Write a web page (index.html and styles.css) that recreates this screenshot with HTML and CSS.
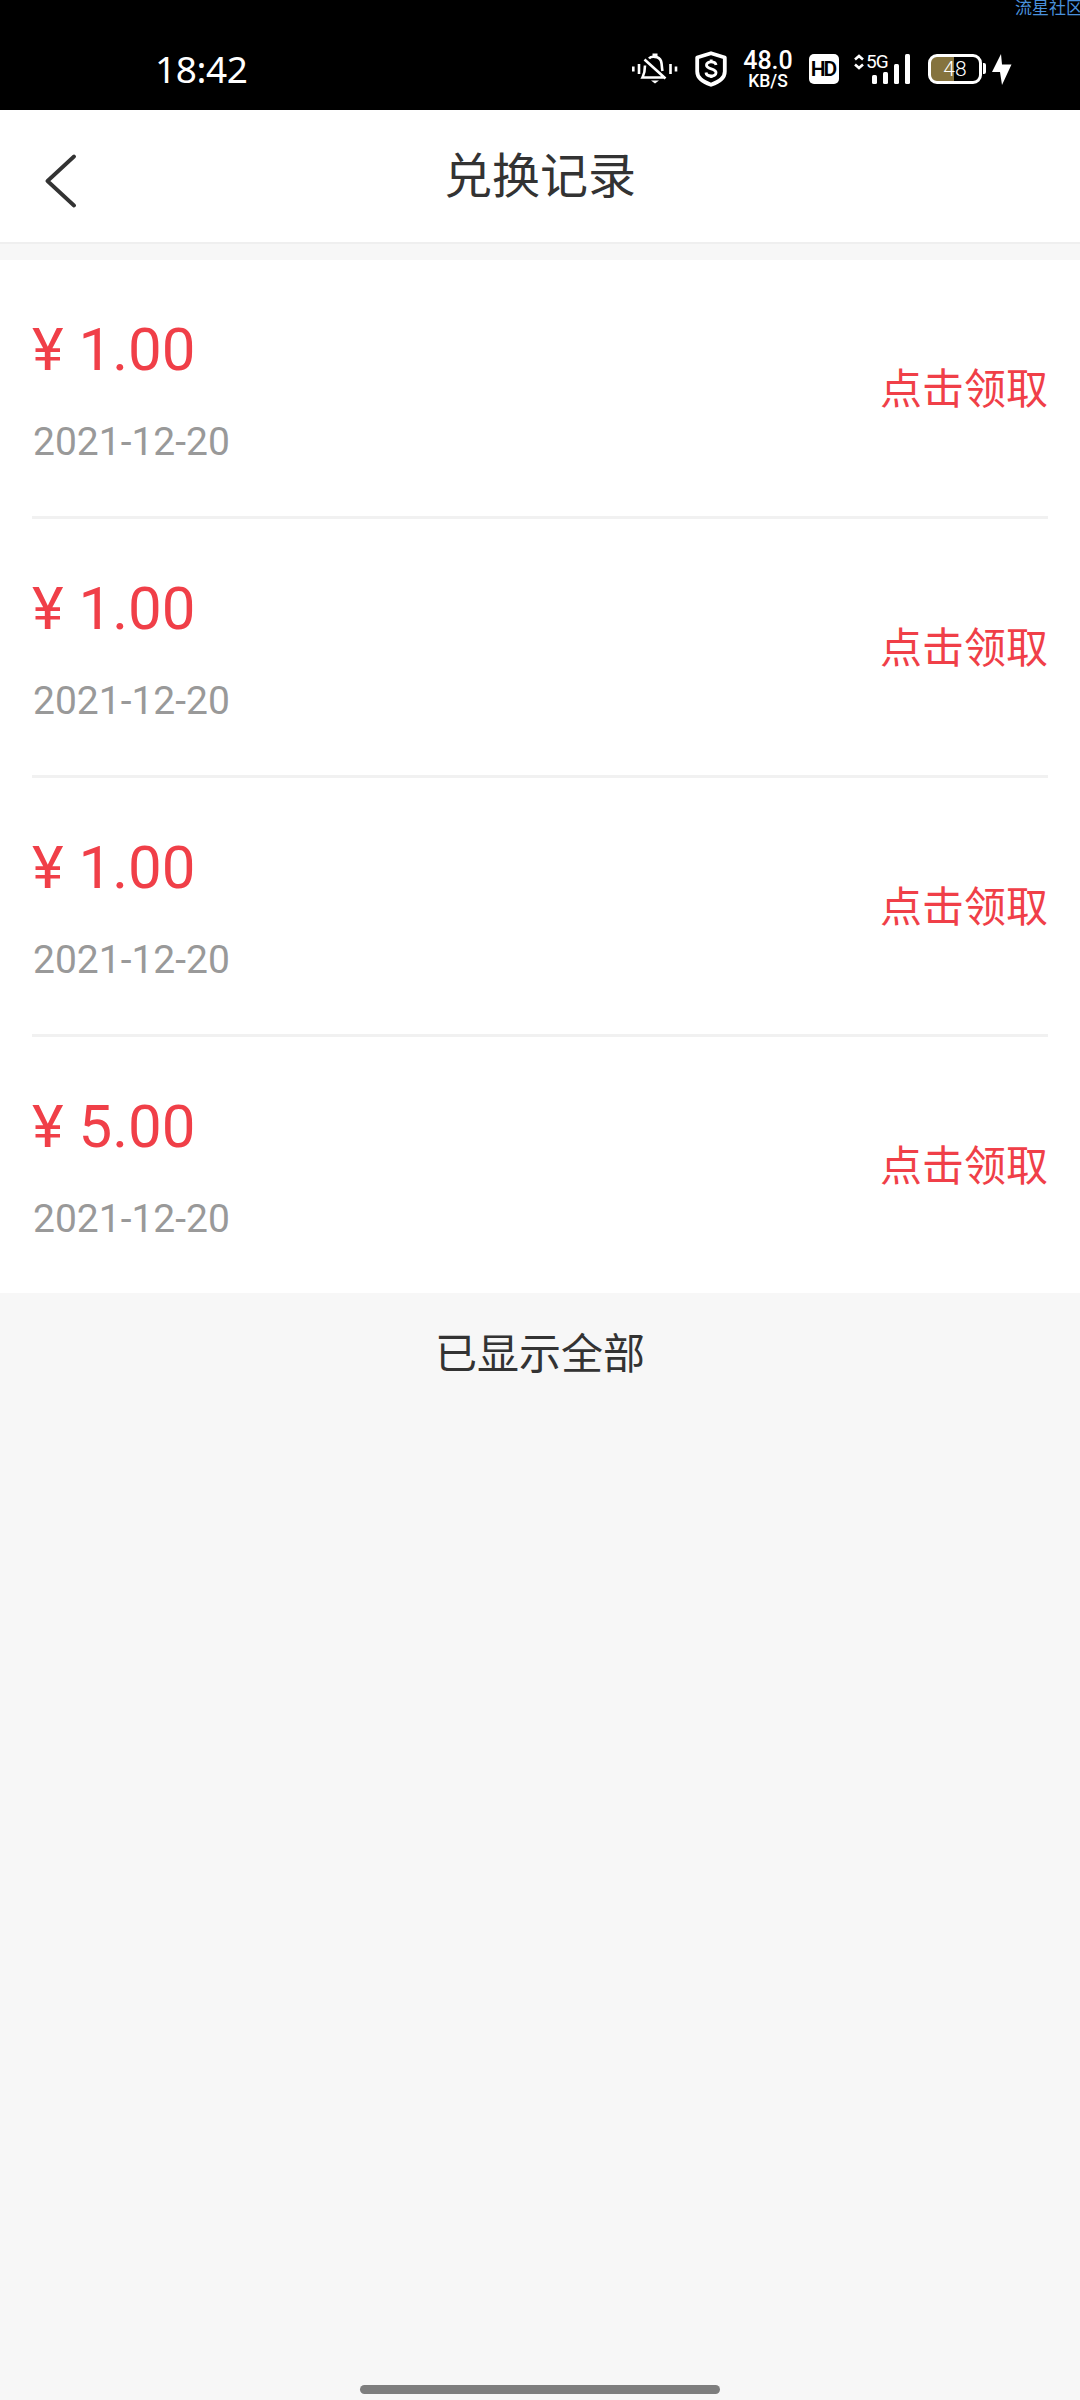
FILE: index.html
```html
<!DOCTYPE html>
<html lang="zh-CN">
<head>
<meta charset="utf-8">
<title>兑换记录</title>
<link rel="stylesheet" href="styles.css">
</head>
<body>
<div class="watermark">流星社区</div>
<header class="status">
  <span class="clock">18:42</span>
  <div class="indicators">
    <svg class="mute" width="46" height="32" viewBox="0 0 46 32" fill="none" stroke="#fff" stroke-width="2.6">
      <path d="M1.3 13.5v5M7 11v10M38.500 11v10M44 13.500v5"/>
      <path d="M17 5.500c2-2.500 10-2.700 12 2.500 1 3 .7 7 1.500 10M13 12.500c0 5-.5 8-2.500 12h22.500M12.500 6.500l21 19"/>
      <path d="M20.500 2h5" stroke-width="3"/>
      <path d="M19 27.500h8l-4 3z" fill="#fff" stroke="none"/>
    </svg>
    <svg class="shield" width="32" height="36" viewBox="0 0 32 36" fill="none" stroke="#fff" stroke-width="3.800" stroke-linejoin="round">
      <path d="M16 2.200L29.800 6.500v14c0 6.500-5 9.800-13.800 13.300C7.200 30.300 2.200 27 2.200 20.500v-14z"/>
      <path d="M21 14c-.5-4-9.500-4.200-9.500 0 0 5 9.500 2.800 9.500 7.800 0 4.500-9.500 4.300-10-.3M16.200 8.500v3M16.200 24v3" stroke-width="2.900"/>
    </svg>
    <div class="speed"><span class="rate">48.0</span><span class="unit">KB/S</span></div>
    <span class="hd">HD</span>
    <div class="signal">
      <svg width="10" height="16" viewBox="0 0 10 16" fill="none" stroke="#fff" stroke-width="2.600"><path d="M1 5.500L5 2l4 3.500M1 10.500L5 14l4-3.500"/></svg>
      <span class="net">5G</span>
      <svg class="bars" width="39" height="31" viewBox="0 0 39 31" fill="#fff"><rect y="21" width="5" height="9" rx="1.500"/><rect x="11" y="18" width="5" height="12" rx="1.500"/><rect x="22" y="10" width="5" height="20" rx="1.500"/><rect x="33" width="5" height="30" rx="1.500"/></svg>
    </div>
    <div class="battery"><span>48</span></div>
    <i class="cap"></i>
    <svg class="bolt" width="20" height="31" viewBox="0 0 20 31" fill="#fff"><path d="M9 0L0 18h8l2 13 9.500-20.500h-9.500z"/></svg>
  </div>
</header>
<nav class="navbar">
  <svg class="back" width="34" height="54" viewBox="0 0 34 54" fill="none" stroke="#333" stroke-width="3.800" stroke-linecap="round" stroke-linejoin="round"><path d="M29 2.500L2.500 27 29 51.500"/></svg>
  <h1 class="title">兑换记录</h1>
</nav>
<main>
  <ul class="records">
    <li class="record"><div><p class="amount">¥ 1.00</p><p class="date">2021-12-20</p></div><a class="claim">点击领取</a></li>
    <li class="record"><div><p class="amount">¥ 1.00</p><p class="date">2021-12-20</p></div><a class="claim">点击领取</a></li>
    <li class="record"><div><p class="amount">¥ 1.00</p><p class="date">2021-12-20</p></div><a class="claim">点击领取</a></li>
    <li class="record"><div><p class="amount">¥ 5.00</p><p class="date">2021-12-20</p></div><a class="claim">点击领取</a></li>
  </ul>
  <p class="end">已显示全部</p>
</main>
<div class="home"></div>
</body>
</html>
```
FILE: styles.css
```css
* { box-sizing: border-box; margin: 0; padding: 0; }
body {
  position: relative;
  display: flex;
  flex-direction: column;
  width: 1080px;
  height: 2400px;
  overflow: hidden;
  background: #f7f7f7;
  color: #333;
  font-family: Roboto, "Noto Sans CJK SC", sans-serif;
}
.watermark {
  position: absolute;
  top: 0;
  left: 1015px;
  font-size: 17px;
  line-height: 16px;
  white-space: nowrap;
  color: #4a90dc;
}
.status {
  display: flex;
  justify-content: space-between;
  height: 110px;
  padding: 48px 68px 0 155px;
  background: #000;
  color: #fff;
}
.clock { font: 37px/42px "Noto Sans", sans-serif; letter-spacing: -0.4px; }
.indicators { display: flex; align-items: flex-start; height: 40px; }
.mute { margin: 5px 17px 0 0; }
.shield { margin: 3px 15px 0 0; }
.speed {
  display: flex;
  flex-direction: column;
  align-items: center;
  width: 52px;
  margin: 1px 15px 0 0;
  font-weight: 500;
}
.rate { font-size: 25px; line-height: 24px; }
.unit { font-size: 17.5px; line-height: 16px; }
.hd {
  width: 30px;
  height: 30px;
  margin: 6px 15px 0 0;
  border-radius: 5px;
  background: #fff;
  color: #000;
  font: 600 21px/31px Roboto, sans-serif;
  letter-spacing: -2px;
  text-indent: -2px;
  text-align: center;
}
.signal { display: flex; align-items: flex-start; margin: 6px 17px 0 0; }
.net { width: 23px; margin: -2px 0 0 2px; font: 400 19px/20px Roboto, sans-serif; letter-spacing: -1px; }
.bars { margin-left: -17px; }
.battery {
  width: 54px;
  height: 30px;
  margin-top: 6px;
  border: 3px solid #fff;
  border-radius: 9px;
  background: linear-gradient(90deg, #85733e 48%, #000 48%);
  font: 300 21px/25px Roboto, sans-serif;
  text-align: center;
}
.cap { width: 3px; height: 11px; margin: 15px 6px 0 1px; border-radius: 0 2px 2px 0; background: #fff; }
.bolt { margin-top: 6px; }
.navbar {
  display: grid;
  grid-template-columns: 120px 1fr 120px;
  height: 134px;
  background: #fff;
  border-bottom: 2px solid #efefef;
}
.back { margin: 44px 0 0 45px; }
.title { font-size: 48px; line-height: 72px; font-weight: 400; text-align: center; margin-top: 31px; }
.records { margin-top: 16px; padding: 0 32px; background: #fff; list-style: none; }
.record {
  display: flex;
  justify-content: space-between;
  align-items: center;
  height: 259px;
  border-bottom: 3px solid #f1f1f1;
}
.record:last-child { height: 256px; border: 0; }
.amount { margin-top: 4px; font-size: 60px; line-height: 70px; color: #f03f48; }
.date { margin: 34px 0 0 1px; font-size: 39px; line-height: 46px; color: #999; }
.claim { margin-top: 3px; font-size: 42px; line-height: 60px; color: #f03f48; }
.end { padding-top: 32px; font-size: 42px; line-height: 60px; text-align: center; }
.home { width: 360px; height: 9px; margin: auto auto 6px; border-radius: 5px; background: #7e7e7e; }
```
